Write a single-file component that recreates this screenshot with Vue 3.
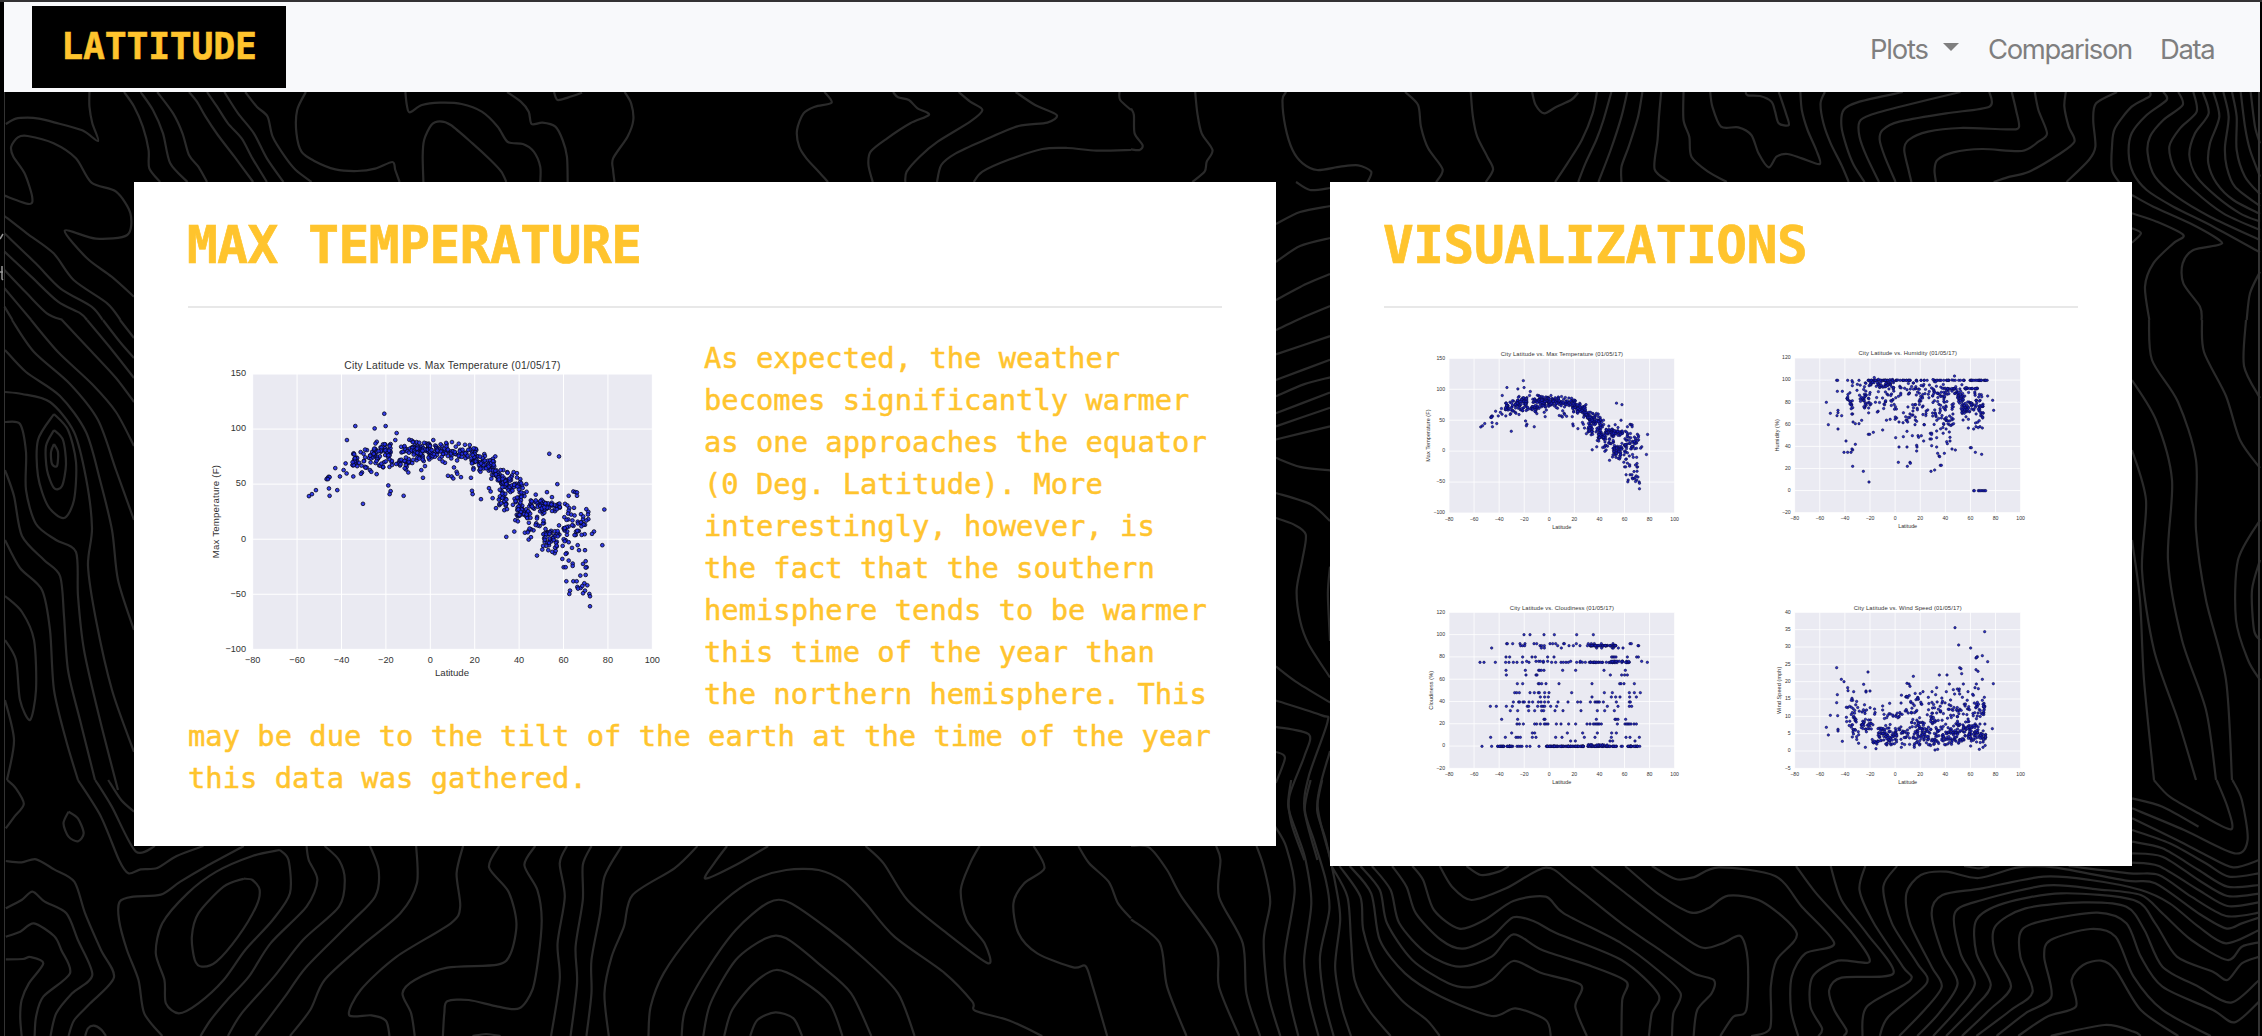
<script setup>
// Seeded generator keeps every plot identical between renders.
function rng(seed) {
  let s = seed
  return () => {
    s = (s * 1664525 + 1013904223) % 4294967296
    return s / 4294967296
  }
}
const nums = (str) => str.trim().split(/\s+/).map((p) => p.split(',').map(Number))
function scatter(seed, fixed, boxes) {
  const r = rng(seed)
  const out = nums(fixed)
  for (const [xa, xb, ya, yb, h, n] of boxes) {
    for (let i = 0; i < n; i++) {
      const t = r()
      out.push([xa + (xb - xa) * t, ya + (yb - ya) * t + (r() + r() - 1) * h])
    }
  }
  return out
}
const row = (y, str) => str.trim().split(/\s+/).map((x) => [Number(x), y])

const temperature = scatter(7, `583,222 496,259 554,266 587,259 620,280 471,301 616,301 357,469 366,463 378,451
417,446 442,451 419,468 413,415 416,411 410,418 419,412 414,418 450,410 436,385 461,391 467,371 470,401 490,410 490,343 512,337 531,331
516,398 513,402 525,381 540,391 544,396 560,403 519,492 595,437 602,454 599,463 641,468 699,414 694,391 705,379 655,398
648,389 650,381 765,369 792,383 800,396 774,408 785,410 790,416 813,412 802,402 843,414 846,453 848,463 873,478
897,445 902,455 908,475 918,505 916,350 1078,342 1107,350 1102,433 1071,457 1086,472 949,591 973,575 976,541
943,511 1016,599 1023,592 1041,647 1057,629 1243,509 1237,616 1212,575 1206,582 1195,538 1189,508 1195,516 1194,524 1185,555
1136,468 1150,455 1156,457 1161,458 1161,468 1125,492 1152,504 1138,505 1123,532 1173,523 1184,583 1175,585 1163,616
1146,624 1167,631 1185,631 1117,657 1136,662 1148,671 1148,678 1187,664 1179,672 1190,682 1187,683 1121,682 1127,682
1171,707 1187,705 1129,724 1150,724 1160,724 1183,730 1192,736 1162,741 1172,744 1164,746 1177,738 1140,752 1138,762 1185,752
1179,760 1198,762 1200,769 1200,799 1130,640 1127,642 1094,640 1075,631 1087,636 1097,633 1100,620 1118,618 1127,601 1136,607
1077,616 1069,618 1121,598 1124,604 658,300 665,302 680,307 730,301 786,307 825,315 860,349 883,343 971,397 981,400 981,413 991,418
1009,433 940,391 952,397 966,407 1010,456 602,313 579,314 770,313 709,311`, [
  [485, 502, 362, 366, 26, 19],
  [505, 552, 365, 355, 38, 16],
  [551, 602, 335, 335, 30, 44],
  [555, 660, 374, 370, 24, 30],
  [632, 720, 336, 334, 33, 68],
  [660, 720, 345, 342, 30, 22],
  [720, 860, 336, 338, 30, 86],
  [845, 915, 365, 382, 34, 60],
  [902, 932, 385, 425, 40, 28],
  [925, 965, 418, 438, 34, 42],
  [925, 952, 475, 490, 30, 22],
  [960, 1005, 448, 478, 48, 36],
  [980, 1024, 522, 525, 30, 34],
  [1020, 1065, 480, 508, 34, 24],
  [1046, 1110, 505, 500, 24, 42],
  [1035, 1062, 545, 550, 22, 9],
  [1058, 1112, 588, 582, 30, 32],
  [1125, 1168, 520, 570, 44, 18],
  [1120, 1138, 560, 575, 24, 9],
  [1172, 1190, 550, 545, 26, 8],
  [998, 1032, 571, 574, 8, 6],
  [1052, 1100, 606, 612, 22, 8]
])
// Plot units of the large figure -> [latitude, value]
const tempData = temperature.map(([x, y]) => [(x - 721) / 6.66, (598 - y) / 3.3])

const humidity = [
  ...scatter(21, `229,217 241,250 235,284 260,151 263,151 293,151 262,184 277,184 264,241 264,248 261,257 275,257 264,297 288,333
316,343 282,367 293,367 303,367 308,360 306,357 308,409 340,424 357,456 398,300 355,313 359,313 370,307 437,323 460,320 487,317
504,317 514,317 506,322 521,333 471,304 471,351 447,351 500,346 501,351 500,363 445,397 480,397 481,400 472,409 543,424
554,420 571,406 574,406 563,370 567,378 569,380 583,370 560,351 545,347 606,357 616,360 661,353 664,353 676,367
695,373 671,482 673,482 685,482 688,482 692,482 696,482 700,482 704,482 707,482 728,211 731,241 713,198 697,294 690,290
678,290 655,294 671,297 698,264 692,257 306,152 308,157 307,167 327,151 322,163 321,181 316,281 327,281 335,271 447,276 440,264 471,270 473,276
495,284 522,284 523,284 496,270 500,274 540,327 544,327 560,323 541,310 590,335 600,333 600,322 560,303 592,341`, [
    [345, 430, 151, 151, 0, 26], [430, 560, 151, 151, 0, 24], [560, 620, 151, 151, 0, 14], [625, 645, 151, 151, 0, 5], [658, 712, 151, 151, 0, 20],
    [384, 432, 160, 162, 16, 38], [345, 384, 160, 160, 14, 12],
    [290, 312, 192, 255, 34, 20], [328, 365, 205, 225, 48, 36], [365, 440, 205, 215, 66, 38],
    [440, 540, 175, 180, 38, 36], [450, 540, 230, 240, 56, 34],
    [540, 605, 190, 195, 44, 42], [540, 612, 260, 265, 56, 50],
    [585, 682, 176, 176, 2, 30], [605, 700, 200, 235, 68, 58],
    [620, 640, 192, 210, 26, 26], [632, 655, 235, 238, 24, 26], [650, 700, 228, 226, 30, 22]
  ])
].map(([x, y]) => [(x - 134) / (678 / 180) - 80, 120 - (y - 84) / (464 / 140)])

const cloud = [
  ...row(134, '372 390 432 463 530 580'),
  ...row(161, '320 322 338 360 375 402 410 450 458 467 491 493 529 565 574 583 604 639 690 694'),
  ...row(167, '362 368 374 420 425 433 473 507 520 540 716 714'),
  ...row(174, '275 424 433 484 590 605 637 655 669 640'),
  ...row(201, '318 329 368 396 406 443 462 635 639 643 648 682 710 715'),
  ...row(217, '240 252 286 317 327 340 351 367 387 430 455 467 483 490 498 505 530 540 547 556 568'),
  ...row(214, '380 408 416 421 430 443 512 541 725 652 668 680'),
  ...row(217, '742'),
  ...row(241, '318 376 416 419 424 432 488 527 612 676'),
  ...row(255, '319 378 408 411 631 665 674 682'),
  ...row(281, '352 368 415 418 425 438 477 576 659 663 672 703'),
  ...row(308, '344 350 358 390 403 415 418 434 447 515 613 637 688 703 721'),
  ...row(321, '421 434 445 576 634 647 660 689 709'),
  ...row(336, '340 356 359 369 373 387 398 415 423 434 445 474 504 533 542 571 585 590 594 598 610 649 688 691'),
  ...row(349, '271 289 319 337 382 386 413 424 429 434 452 470 622 654 688 695'),
  ...row(362, '331 353 386 404 425 431 465 489 543 592 614 643'),
  ...row(388, '305 353 432 435 589 645 648 654 677'),
  ...row(402, '351 358 370 404 410 421 433 438 444 469 483 506 527 561 570 580 585 590 594 598 604 652 675 680 684 688 693 702 709'),
  ...row(429, '335 397 404 502 548 592 635 649'),
  ...row(442, '272 316 348 354 361 397 408 467 486 553 585 634 678 690 718'),
  ...row(453, '512 526 630 638 705'),
  ...row(469, '246 275 351 356 361 366 380 390 417'),
  ...scatter(31, '566,464 572,464', [
    [562, 648, 167, 167, 1, 50], [570, 690, 217, 217, 1, 36], [630, 690, 214, 214, 1, 10],
    [292, 340, 469, 469, 0, 26], [437, 650, 469, 469, 0, 130], [560, 622, 465, 465, 0, 14], [660, 720, 469, 469, 0, 26]
  ])
].map(([x, y]) => [(x - 147) / (677 / 180) - 80, 120 - (y - 67) / (468 / 140)])

const wind = scatter(44, `615,113 704,125 626,165 662,174 697,197 682,200 678,204 680,202 713,215 629,233 633,236 635,251 678,239
684,244 697,268 730,281 679,282 685,296 675,293 727,416 591,255 568,255 598,282 490,259 471,280 477,282 480,289
354,246 260,233 274,268 282,275 293,293 294,302 262,314 260,338 229,412 235,435 241,376 263,377 264,418 264,423 277,454
341,283 348,303 348,306 360,303 311,305 560,293 546,305 519,305 589,305 610,299 622,297 628,297 627,303 654,305 670,316 703,322
697,331 702,340 535,322 346,472 378,476 454,472 555,480 563,478 688,478 699,472 493,472 419,340 398,348 398,360 306,325 308,331
304,331 640,282 557,314 668,313 629,312`, [
  [288, 376, 370, 370, 58, 44], [332, 364, 405, 410, 20, 20], [300, 330, 410, 430, 44, 14], [360, 385, 448, 462, 12, 10],
  [384, 440, 434, 436, 36, 74], [400, 450, 378, 380, 10, 12], [440, 505, 372, 372, 34, 20],
  [440, 505, 430, 435, 40, 36], [450, 520, 326, 328, 20, 20],
  [495, 610, 436, 438, 34, 104], [500, 560, 405, 405, 24, 22], [530, 615, 358, 365, 52, 42],
  [610, 710, 360, 370, 54, 58], [605, 665, 434, 436, 36, 60], [655, 710, 443, 446, 26, 44], [615, 700, 405, 410, 26, 24]
]).map(([x, y]) => [(x - 134) / (678 / 180) - 80, 40 - (y - 67) / (468 / 45)])

const LATS = [-80, -60, -40, -20, 0, 20, 40, 60, 80, 100]
const fmt = (v) => (v < 0 ? '−' + -v : String(v))
function plot(o) {
  const px = (v) => o.x0 + ((v + 80) / 180) * (o.x1 - o.x0)
  const py = (v) => o.y1 - ((v - o.min) / (o.max - o.min)) * (o.y1 - o.y0)
  const ticks = []
  for (let v = o.min; v <= o.max; v += o.step) ticks.push({ y: py(v), label: fmt(v) })
  return {
    ...o,
    ticks,
    lats: LATS.map((v) => ({ x: px(v), label: fmt(v) })),
    pts: o.data.map(([a, b]) => [px(a).toFixed(1), py(b).toFixed(1)])
  }
}
const main = plot({
  w: 480, h: 350, x0: 188, x1: 1387, y0: 102, y1: 928, min: -100, max: 150, step: 50, data: tempData,
  title: 'City Latitude vs. Max Temperature (01/05/17)', tl: 648, tx: 787, ty: 87, fs: 31,
  ylabel: 'Max Temperature (F)', yl: 280, yx: 88, tick: 27.5, tickY: 968, tickX: 168, tf: 7,
  lx: 786, ly: 1009, ll: 102, lf: 29, r: 5.6
})
const small = (o) => plot({
  w: 310, h: 220, fs: 17.6, tick: 15.5, lf: 16.5, ll: 57, r: 3.7, tickX: o.x0 - 12, tf: 4, tx: (o.x0 + o.x1) / 2, lx: (o.x0 + o.x1) / 2,
  ty: o.y0 - 8, ly: o.y1 + 47, tickY: o.y1 + 23, ...o
})
const thumbs = [
  small({ x0: 147, x1: 824, y0: 85, y1: 549, min: -100, max: 150, step: 50, data: tempData, title: 'City Latitude vs. Max Temperature (01/05/17)', tl: 367, ylabel: 'Max Temperature (F)', yl: 157, yx: 90 }),
  small({ x0: 134, x1: 812, y0: 84, y1: 548, min: -20, max: 120, step: 20, data: humidity, title: 'City Latitude vs. Humidity (01/05/17)', tl: 295, ylabel: 'Humidity (%)', yl: 97, yx: 87 }),
  small({ x0: 147, x1: 824, y0: 67, y1: 535, min: -20, max: 120, step: 20, data: cloud, title: 'City Latitude vs. Cloudiness (01/05/17)', tl: 312, ylabel: 'Cloudiness (%)', yl: 116, yx: 98 }),
  small({ x0: 134, x1: 812, y0: 67, y1: 535, min: -5, max: 40, step: 5, data: wind, title: 'City Latitude vs. Wind Speed (01/05/17)', tl: 324, ylabel: 'Wind Speed (mph)', yl: 142, yx: 94 })
]

// Smooth curve through a list of points.
function curve(str) {
  const p = nums(str)
  let d = `M${p[0][0]} ${p[0][1]}`
  for (let i = 0; i < p.length - 1; i++) {
    const a = p[i - 1] || p[i], b = p[i], c = p[i + 1], e = p[i + 2] || c
    const k = 7
    d += `C${(b[0] + (c[0] - a[0]) / k).toFixed(1)} ${(b[1] + (c[1] - a[1]) / k).toFixed(1)} ${(c[0] - (e[0] - b[0]) / k).toFixed(1)} ${(c[1] - (e[1] - b[1]) / k).toFixed(1)} ${c[0]} ${c[1]}`
  }
  return d
}
const sheet = (t, lines) => ({ t, d: lines.trim().split('\n').map(curve).join('') })
const contours = [
  sheet('translate(0 90) scale(.7213 .33333)', `8,102 22,86 38,83 54,86 75,97 114,121 136,153 128,100 124,50 124,6
172,6 186,50 198,110 206,180 207,235 222,276
195,6 212,60 226,130 236,220 260,276
218,6 240,70 253,130 262,195 275,230 287,276
262,6 273,35 285,80 302,135 325,200 351,276
287,6 301,50 316,100 335,145 350,205 370,276
311,6 330,70 352,130 370,205 393,276
340,6 356,50 371,80 378,140 395,200 410,240 432,276
424,6 412,60 411,130 418,185 435,212 465,238 495,243 520,236 544,216 548,240 554,276
562,6 564,45 568,67 585,45 610,38 640,42 668,65 690,110 704,156 725,162 740,185 749,230 749,276
587,276 586,200 588,150 598,105 610,94 625,105 655,160 680,210 695,245 702,276
703,6 722,35 733,65 737,102 752,98 770,110 780,150 786,200 787,276
768,6 773,30 788,22 807,8
866,6 875,40 878,90 870,140 850,205 850,240 852,276
1143,6 1153,38 1130,50 1114,70 1105,120 1108,170 1118,205 1135,245 1148,276
1238,6 1245,22 1260,30 1272,55 1288,74 1262,100 1230,145 1207,185 1204,225 1210,276
1329,6 1345,35 1362,60 1345,95 1300,155 1275,200 1257,245 1255,276
1408,6 1435,45 1465,75 1452,98 1412,108 1365,150 1325,190 1305,225 1299,276
1350,276 1362,245 1400,208 1445,177 1480,174 1520,182 1568,180
1552,6 1553,30 1568,60`),
  sheet('translate(1131 90) scale(.7213 .33333)', `0,55 4,75 5,130 16,165 12,180 0,178
89,6 92,70 98,130 113,180 105,215 102,245 85,276
215,6 210,30 214,110 224,180 238,220 258,240 290,230 315,226 333,245 328,276
380,6 398,45 402,110 412,175 432,238 423,276
471,6 474,80 480,140 494,200 502,238 492,276
556,6 561,45 573,70 590,50 610,30 620,8
646,6 640,70 625,150 605,220 588,276
666,6 655,90 645,150 630,220 620,276
688,6 680,80 665,180 648,276
709,6 703,80 690,170 680,230 680,276
735,6 732,80 730,150 726,238 747,276
766,6 766,90 774,140 777,200 800,245 826,276
803,6 806,50 818,110 842,112 860,135 870,190 884,232 895,200 910,192 930,205 955,222 950,180 938,120 930,60 928,6
852,6 855,16 872,18 888,35 893,65 898,100 912,105 908,70 898,6
962,6 956,40 960,100 970,160 985,225 995,276
1070,6 1010,35 988,60 985,110 992,170 1002,225 1017,276
1150,6 1070,48 1025,75 1010,95 1010,140 1020,200 1037,276
1190,6 1190,50 1130,70 1065,95 1042,120 1038,150 1045,200 1060,276
1221,6 1227,60 1231,112 1215,118 1150,114 1105,125 1078,150 1072,180 1078,240 1082,276
1253,6 1258,60 1270,130 1258,155 1235,183 1180,177 1140,187 1118,210 1114,240 1116,276
1296,6 1294,50 1300,110 1308,155 1285,195 1245,245 1215,262 1196,276
1367,6 1338,40 1334,90 1337,170 1328,210 1297,276`),
  sheet('translate(1780 0) scale(.33333)', `1110,276 1108,290 1055,320 1005,385 996,440 996,510 1020,550
1150,276 1160,300 1100,345 1055,400 1046,460 1060,520 1100,570 1180,620 1300,680 1440,757
1195,276 1208,315 1150,360 1110,410 1103,460 1125,530 1190,590 1290,650 1440,720
1240,276 1250,335 1200,385 1168,440 1185,510 1240,570 1330,640 1440,690
1268,276 1286,340 1245,400 1228,465 1250,530 1310,590 1380,640 1440,665
1300,276 1318,350 1290,430 1285,490 1310,550 1360,600 1440,642
1330,276 1346,350 1335,440 1340,500 1365,560 1440,618
1356,276 1370,350 1370,450 1395,530 1440,583
1382,276 1395,380 1410,450 1440,530
1412,276 1425,380 1440,430
1056,585 1120,620 1230,670 1320,722 1315,735 1240,750 1208,790 1210,850 1260,920 1265,960
1056,640 1130,665 1210,705 1180,730 1120,790 1095,860 1108,960
1056,685 1083,700 1056,728
1400,960 1410,880 1440,815`),
  sheet('scale(.44643 .33333)', `10,587 65,612 72,590 55,520 30,470 25,440 40,412 62,408 120,430 170,475 205,548 260,575 292,640 285,705 215,716 145,692 195,775 250,830 300,890
10,648 60,700 120,760 165,840 240,910 270,960
10,700 80,790 135,865 205,920 230,960
10,755 70,830 130,905 180,940 195,960
10,810 60,880 105,940 140,960
10,865 70,960
10,920 28,960`),
  sheet('', `120,320 134,338
103,320 120,342 134,358
87,320 112,350 134,378
62,320 92,352 116,378 134,402
31,320 58,352 92,384 116,412 134,446
12,320 34,352 70,384 98,420 116,470 134,520
5,350 26,372 60,396 86,432 100,480 112,530 118,580 134,630
5,392 22,394 50,402 74,432 86,478 92,528 88,566 96,620 112,690 134,752
54,414 68,430 76,462 74,500 64,518 48,506 38,476 38,440 54,414
54,430 63,440 66,464 62,486 54,488 47,470 46,446 54,430
54,444 58,452 57,466 52,464 51,452 54,444
5,422 20,424 26,452 26,490 36,524 56,540 76,552 78,596 84,650 100,720 118,790
5,470 14,496 22,536 44,560 60,576 64,616 68,670 80,720 95,780
5,540 20,568 42,590 50,630 54,690 66,740 78,780
5,596 22,612 34,640 36,690 30,720 20,700 16,660 5,640
5,700 14,740 7,780
2202,320 2204,352 2226,396 2240,440 2260,468
2149,320 2152,360 2178,402 2196,460 2196,530 2206,600 2226,680 2232,780
2246,320 2244,366 2260,398
2132,380 2156,420 2172,480 2168,560 2182,640 2206,710 2216,780
2132,450 2146,500 2142,570 2154,650 2178,720 2196,780
2132,540 2140,600 2144,680 2154,780
2260,520 2238,560 2236,620 2248,660 2260,680
2260,560 2252,590 2254,630 2260,640
1276,224 1300,212 1330,206
1276,262 1300,246 1330,238
1276,300 1306,284 1330,274
1276,330 1306,316 1330,306
1296,182 1310,190 1330,188`),
  sheet('translate(680 330) scale(.43365 .33806)', `1374,72 1499,18
1374,148 1499,88
1374,196 1440,160 1499,140
1374,246 1499,185
1374,285 1499,230
1374,324 1499,285
1374,378 1430,405 1499,415
1374,482 1455,516 1499,565
1374,556 1415,575 1443,605 1435,680 1422,770 1430,860 1450,930 1499,1028
1499,700 1494,780 1499,920
1374,995 1420,1040 1499,1102
1374,1096 1480,1140 1493,1160 1450,1320 1440,1420 1470,1568
1374,1174 1450,1196 1440,1260 1405,1380 1410,1460 1440,1568
1374,1248 1395,1265 1374,1340
1499,1245 1470,1400 1499,1560`),
  sheet('translate(0 780) scale(.7213 .33333)', `8,145 20,110 33,72 22,25 10,0
108,0 140,110 165,240 178,280 195,268 218,264 245,228 282,198
132,0 155,80 188,214 215,198
150,0 168,60 186,95
95,95 88,130 95,170 108,184 116,160 108,115 95,95
8,243 30,247 50,238 75,268 103,305 118,400 140,510 158,592 125,670 103,720 95,768
8,385 30,360 45,335 62,365 92,400 108,480 128,585 100,640 78,700 70,768
8,470 28,455 47,430 75,468 85,510 97,580 60,650 50,710 48,768
8,538 32,537 42,531 60,550 40,610 30,660 28,710 30,768
118,768 122,745 130,737 140,748 147,768
338,198 285,260 250,305 223,344 185,350 166,365 165,420 176,510 192,600 200,700 225,768
388,210 350,228 300,275 260,340 225,430 216,520 228,600 230,670 248,700 275,670 310,600 340,510 378,420 402,340 400,240 388,210
338,296 310,320 275,400 266,470 270,540 280,560 300,545 330,470 355,380 360,330 350,300 338,296
425,198 428,240 440,300 425,380 375,490 345,590 315,660 292,720 278,768
450,198 470,240 478,300 470,380 420,480 380,590 335,700 316,768
513,198 525,270 520,350 485,430 425,560 395,650 354,768
577,198 578,310 555,400 500,500 450,600 430,690 402,768
642,198 633,280 638,380 625,430 550,530 500,630 484,705 515,706 535,722 540,768
692,198 678,262 705,335 716,430 708,520 690,554 620,563 575,600 558,640 570,700 575,768
742,198 727,255 745,330 751,420 746,540 738,630 720,685 690,680 650,660 620,664 616,700 614,768
655,768 674,762 694,768
786,198 776,250 783,350 773,490 776,600 764,768
820,198 808,255 808,360 798,500 800,610 791,768
862,198 838,290 832,400 820,540 820,640 813,768
967,198 935,265 877,345 865,440 848,530 838,640 844,768
1065,198 1020,255 978,296 990,250 1008,198
899,768 902,680 920,580 960,460 1005,360 1045,300 1090,270 1135,270 1170,305 1200,370 1240,470 1310,580 1348,665 1352,692 1400,722 1445,768
945,768 950,690 980,570 1020,450 1065,368 1095,368 1150,450 1200,540 1245,640 1268,768
975,768 985,670 1020,540 1062,475 1090,475 1140,560 1180,640 1208,768
1004,768 1015,690 1045,610 1076,570 1110,600 1150,670 1168,768
1040,768 1050,720 1075,697 1100,715 1112,768
1200,198 1225,250 1258,360 1310,455 1370,550 1365,490 1340,420 1332,330 1345,250 1358,198
1433,198 1448,265 1420,310 1405,370 1412,460 1438,520 1488,562 1505,558 1515,620 1535,768
1495,198 1510,250 1537,305 1550,370 1568,415`),
  sheet('translate(1131 780) scale(.7213 .33333)', `0,418 40,490 50,620 77,768
0,198 25,202 50,270 70,350 118,500 122,620 150,768
118,198 124,240 122,350 155,490 160,640 179,768
174,198 184,260 193,365 184,480 190,640 207,768
200,140 215,200 227,330 213,530 220,660 232,768
222,0 218,80 230,160 242,240 250,370 240,540 247,660 260,768
249,0 241,90 255,190 270,300 275,390 262,530 268,660 281,768
265,0 258,90 270,180 285,330 290,420 283,560 292,680 305,768
278,258 300,350 305,480 310,600 330,690 360,768
289,258 318,350 322,450 340,560 375,660 410,720 428,768
303,258 333,340 345,480 380,580 430,650 500,708 533,685 575,720 582,768
318,258 345,330 355,430 390,540 440,610 470,622 500,600 530,543 570,580 624,615 616,680 632,768
334,258 360,330 372,430 410,520 455,560 500,530 530,463 570,510 640,560 687,605 681,660 680,768
362,258 382,320 395,400 430,480 460,506 500,470 530,412 560,425 590,460 680,540 731,642 722,700 718,768
390,258 405,300 420,390 455,446 490,420 530,363 575,350 600,400 680,490 730,570 762,640 752,700 750,768
428,258 445,320 472,360 520,325 575,263 610,310 680,430 740,520 780,580 808,600 805,640 785,690 780,768
465,258 485,285 510,275 524,258
638,258 680,330 740,430 790,502 820,490 845,468 855,540 853,690 835,710 817,768
685,258 730,340 775,397 800,385 828,347 875,365 923,460 895,540 887,620 886,745 860,768
722,258 755,297 780,292 815,262 893,288 930,380 975,490 935,520 916,590 915,690 925,768
922,258 950,340 1000,460 1024,545 980,542 945,590 942,680 958,745 953,768
970,258 985,360 1020,460 1057,580 985,593 968,630 975,690 992,750 988,768
1018,258 1010,330 1030,430 1070,560 1080,602 1020,680 1014,768
1062,258 1043,320 1055,430 1090,550 1103,610 1050,710 1038,768
1065,768 1100,690 1124,620 1110,560 1080,430 1075,340 1095,285 1130,275 1175,294 1230,262 1280,262 1380,302 1420,310 1480,400 1518,445 1540,430 1564,413
1090,768 1120,700 1146,610 1125,520 1110,400 1125,345 1180,325 1265,290 1330,300 1400,330 1440,370 1480,440 1518,490 1564,450
1112,768 1145,690 1170,610 1150,520 1142,400 1180,360 1270,316 1340,328 1400,345 1430,400 1470,480 1520,540 1540,500 1564,487
1130,768 1170,680 1192,615 1172,520 1172,420 1210,370 1290,340 1390,360 1420,430 1450,530 1500,575 1520,600 1540,550 1564,530
1152,768 1190,690 1220,620 1198,520 1198,440 1240,385 1320,367 1380,380 1405,450 1430,560 1480,620 1525,668 1564,600
1172,768 1220,690 1250,635 1233,530 1235,450 1270,420 1340,398 1380,430 1400,530 1430,620 1500,690 1530,727 1564,665
1200,768 1240,700 1276,650 1266,530 1275,480 1330,447 1365,470 1390,590 1430,690 1497,768
1230,768 1270,710 1310,680 1304,600 1320,555 1345,542 1365,570 1400,690 1452,768
1275,768 1350,735 1390,755 1400,768
1155,258 1175,265 1190,258
1300,258 1385,280 1425,285 1470,350 1518,408 1564,398
1388,248 1425,258 1480,330 1520,378 1564,367
1388,220 1430,230 1480,300 1520,348 1564,341
1388,185 1430,205 1480,270 1520,320 1564,315
1388,150 1440,190 1490,250 1522,290 1564,280
1388,115 1450,180 1490,225 1528,262 1564,240
1388,85 1460,150 1530,220 1548,180 1540,60 1527,0
1388,55 1430,80 1480,140
1418,0 1440,50 1480,100 1525,148 1520,80 1505,0`)
]
</script>

<template>
  <div class="page">
    <svg class="topo" viewBox="0 0 2262 1036" aria-hidden="true">
      <g v-for="(c, i) in contours" :key="i" :transform="c.t"><path :d="c.d" /></g>
      <path class="sliver" d="M0 239L3 234M0 272H3M2 266V279L3 280" />
    </svg>
    <nav class="navbar">
      <a class="brand">LATTITUDE</a>
      <ul class="links">
        <li class="plots">Plots<i class="caret"></i></li>
        <li class="comparison">Comparison</li>
        <li class="data">Data</li>
      </ul>
    </nav>
    <main class="content">
      <section class="card article">
        <h1>MAX TEMPERATURE</h1>
        <hr />
        <div class="figure">
          <svg class="plot large" :viewBox="`0 0 ${main.w * 3} ${main.h * 3}`" :width="main.w" :height="main.h">
            <rect class="area" :x="main.x0" :y="main.y0" :width="main.x1 - main.x0" :height="main.y1 - main.y0" />
            <line v-for="l in main.lats" :key="'v' + l.label" class="grid" :x1="l.x" :x2="l.x" :y1="main.y0" :y2="main.y1" />
            <line v-for="t in main.ticks" :key="'h' + t.label" class="grid" :x1="main.x0" :x2="main.x1" :y1="t.y" :y2="t.y" />
            <circle v-for="(p, i) in main.pts" :key="i" :cx="p[0]" :cy="p[1]" :r="main.r" />
            <text v-for="l in main.lats" :key="'a' + l.label" :x="l.x" :y="main.tickY" :font-size="main.tick" text-anchor="middle">{{ l.label }}</text>
            <text v-for="t in main.ticks" :key="'b' + t.label" :x="main.tickX" :y="t.y + main.tf" :font-size="main.tick" text-anchor="end">{{ t.label }}</text>
            <text :x="main.tx" :y="main.ty" :font-size="main.fs" :textLength="main.tl" text-anchor="middle">{{ main.title }}</text>
            <text :x="main.lx" :y="main.ly" :font-size="main.lf" :textLength="main.ll" text-anchor="middle">Latitude</text>
            <text :transform="`translate(${main.yx} ${(main.y0 + main.y1) / 2}) rotate(-90)`" :font-size="main.lf" :textLength="main.yl" text-anchor="middle">{{ main.ylabel }}</text>
          </svg>
        </div>
        <p>As expected, the weather becomes significantly warmer as one approaches the equator (0 Deg. Latitude). More interestingly, however, is the fact that the southern hemisphere tends to be warmer this time of the year than the northern hemisphere. This may be due to the tilt of the earth at the time of the year this data was gathered.</p>
      </section>
      <section class="card gallery">
        <h1>VISUALIZATIONS</h1>
        <hr />
        <div class="thumbs">
          <svg v-for="c in thumbs" :key="c.title" class="plot" :viewBox="`0 0 ${c.w * 3} ${c.h * 3}`" :width="c.w" :height="c.h">
            <rect class="area" :x="c.x0" :y="c.y0" :width="c.x1 - c.x0" :height="c.y1 - c.y0" />
            <line v-for="l in c.lats" :key="'v' + l.label" class="grid" :x1="l.x" :x2="l.x" :y1="c.y0" :y2="c.y1" />
            <line v-for="t in c.ticks" :key="'h' + t.label" class="grid" :x1="c.x0" :x2="c.x1" :y1="t.y" :y2="t.y" />
            <circle v-for="(p, i) in c.pts" :key="i" :cx="p[0]" :cy="p[1]" :r="c.r" />
            <text v-for="l in c.lats" :key="'a' + l.label" :x="l.x" :y="c.tickY" :font-size="c.tick" text-anchor="middle">{{ l.label }}</text>
            <text v-for="t in c.ticks" :key="'b' + t.label" :x="c.tickX" :y="t.y + c.tf" :font-size="c.tick" text-anchor="end">{{ t.label }}</text>
            <text :x="c.tx" :y="c.ty" :font-size="c.fs" :textLength="c.tl" text-anchor="middle">{{ c.title }}</text>
            <text :x="c.lx" :y="c.ly" :font-size="c.lf" :textLength="c.ll" text-anchor="middle">Latitude</text>
            <text :transform="`translate(${c.yx} ${(c.y0 + c.y1) / 2}) rotate(-90)`" :font-size="c.lf" :textLength="c.yl" text-anchor="middle">{{ c.ylabel }}</text>
          </svg>
        </div>
      </section>
    </main>
    <span class="edge left"></span>
    <span class="edge right"></span>
  </div>
</template>

<style>
body { margin: 0; background: #000; }
</style>
<style scoped>
* { box-sizing: border-box; }
.page { position: relative; height: 1036px; overflow: hidden; background: #000; border-top: 2px solid #333234; }
.topo { position: absolute; left: 0; top: -2px; width: 2262px; height: 1036px; }
.topo path { fill: none; stroke: #2a2a2a; stroke-width: 2.2; vector-effect: non-scaling-stroke; stroke-linejoin: round; }
.topo .sliver { stroke: #999; stroke-width: 1.5; }
.navbar { position: relative; height: 90px; margin: 0 2px 0 4px; padding: 4px 43px 4px 28px; display: flex; justify-content: space-between; align-items: center; background: #f8f9fb; }
.brand { width: 254px; height: 82px; display: flex; align-items: center; justify-content: center; background: #000; color: #ffc42d; font: bold 36.4px/54px "DejaVu Sans Mono", monospace; letter-spacing: -.2px; -webkit-text-stroke: .5px #ffc42d; }
.links { display: flex; list-style: none; margin: 0; padding: 3px 0 0; font: 27.4px/42px Inter, "Liberation Sans", sans-serif; color: #7f7f7f; letter-spacing: -1.35px; }
.plots { display: flex; width: 118px; letter-spacing: -1.2px; }
.comparison { width: 172px; }
.data { width: 57px; }
.caret { width: 0; height: 0; margin: 15px 0 0 15px; border: 8px solid transparent; border-top-color: #7f7f7f; border-bottom: 0; }
.content { position: relative; display: flex; align-items: flex-start; gap: 54px; padding: 90px 0 0 134px; }
.card { background: #fff; padding: 29px 54px 0; color: #ffc42d; }
.article { width: 1142px; height: 664px; }
.gallery { width: 802px; height: 684px; }
h1 { margin: 0 0 0 -1px; font: bold 51px/70px "DejaVu Sans Mono", monospace; letter-spacing: -.4px; -webkit-text-stroke: .7px #ffc42d; }
hr { margin: 25px 0 0; border: 0; height: 2px; background: #e8e8e8; }
.figure { float: left; width: 516px; height: 350px; padding-left: 2px; margin-top: 32px; }
p { margin: 0; padding-top: 29px; font: 28.8px/42px "DejaVu Sans Mono", monospace; -webkit-text-stroke: .5px #ffc42d; }
.thumbs { display: grid; grid-template-columns: 350px 350px; grid-auto-rows: 260px; margin: 22px 0 0 16px; }
.plot { display: block; overflow: visible; }
.area { fill: #eaeaf2; }
.grid { stroke: #fff; stroke-width: 2.4; }
.large .grid { stroke-width: 3; }
circle { fill: #161cc4; stroke: #0a0a3c; stroke-width: 1.6; fill-opacity: .9; }
.large circle { fill: #1f2ae8; stroke: #06061c; stroke-width: 2.4; }
.plot text { fill: #333; font-family: "Liberation Sans", Arial, sans-serif; }
.edge { position: absolute; top: 90px; bottom: 0; width: 2px; background: #333; }
.left { left: 4px; width: 1px; }
.right { right: 2px; }
</style>
